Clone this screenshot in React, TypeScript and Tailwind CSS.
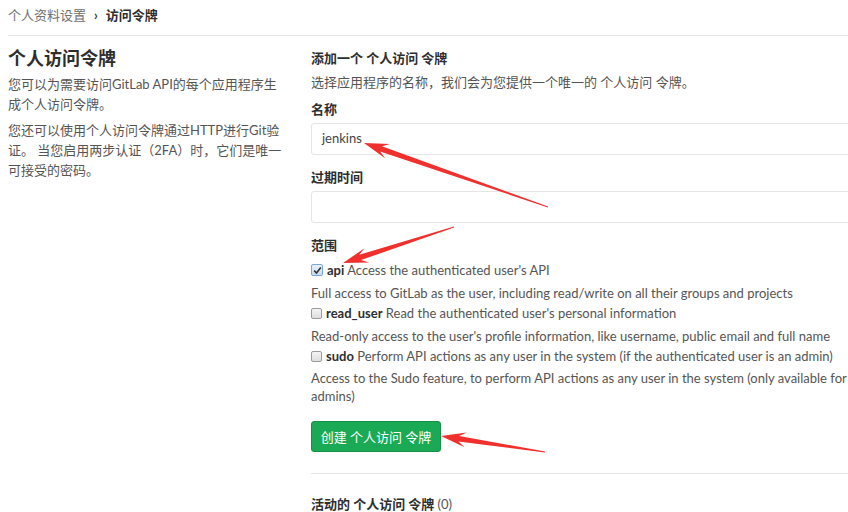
import React from "react";

const FONT = { fontFamily: '"Lato", "Noto Sans CJK SC", sans-serif' };

function arrowPoints(tx: number, ty: number, hx: number, hy: number) {
  const dx = hx - tx;
  const dy = hy - ty;
  const len = Math.hypot(dx, dy);
  const ux = dx / len;
  const uy = dy / len;
  const nx = -uy;
  const ny = ux;
  const headLen = 25;
  const headW = 7.5;
  const jointLen = 18;
  const shaftW = 2.8;
  const tailW = 0.4;
  const wx = hx - ux * headLen;
  const wy = hy - uy * headLen;
  const jx = hx - ux * jointLen;
  const jy = hy - uy * jointLen;
  const pts = [
    [tx + nx * tailW, ty + ny * tailW],
    [jx + nx * shaftW, jy + ny * shaftW],
    [wx + nx * headW, wy + ny * headW],
    [hx, hy],
    [wx - nx * headW, wy - ny * headW],
    [jx - nx * shaftW, jy - ny * shaftW],
    [tx - nx * tailW, ty - ny * tailW],
  ];
  return pts.map((p) => `${p[0].toFixed(1)},${p[1].toFixed(1)}`).join(" ");
}

function CheckBox({ checked }: { checked?: boolean }) {
  if (checked) {
    return (
      <span className="inline-flex items-center justify-center w-[12px] h-[12px] border border-[#7aa7d8] rounded-[2px] bg-gradient-to-b from-[#e6f0fb] to-[#c9dcf2] shrink-0">
        <svg width="9" height="9" viewBox="0 0 9 9">
          <path d="M1.2 4.6 L3.5 7 L7.8 1.6" stroke="#333" strokeWidth="1.6" fill="none" />
        </svg>
      </span>
    );
  }
  return (
    <span className="inline-block w-[11px] h-[11px] border border-[#9a9a9a] rounded-[2px] bg-gradient-to-b from-[#f4f4f4] to-[#dedede] shrink-0" />
  );
}

function Scope({ checked, name, text }: { checked?: boolean; name: string; text: string }) {
  return (
    <div className="flex items-center gap-[4px] h-[20px] leading-[20px] whitespace-nowrap">
      <CheckBox checked={checked} />
      <span>
        <b className="font-bold text-[#2e2e2e]">{name}</b> {text}
      </span>
    </div>
  );
}

export default function App() {
  return (
    <div className="relative w-[848px] h-[512px] overflow-hidden bg-white text-[13px] text-[#555]" style={FONT}>
      <div className="pl-2">
        <div className="h-[36px] pt-[6px] leading-[18px] border-b border-[#e5e5e5] flex items-start gap-[8px]">
          <span className="text-[#707070]">个人资料设置</span>
          <span className="font-bold text-[#333] text-[13px]">›</span>
          <span className="font-bold text-[#2e2e2e]">访问令牌</span>
        </div>
      </div>

      <div className="flex pl-2">
        <div className="w-[303px] shrink-0">
          <h4 className="mt-[10px] text-[18px] leading-[24px] font-bold text-[#2e2e2e]">个人访问令牌</h4>
          <p className="mt-[4px] leading-[20px] whitespace-nowrap">
            您可以为需要访问GitLab API的每个应用程序生
            <br />
            成个人访问令牌。
          </p>
          <p className="mt-[6px] leading-[20px] whitespace-nowrap">
            您还可以使用个人访问令牌通过HTTP进行Git验
            <br />
            证。 当您启用两步认证（2FA）时，它们是唯一
            <br />
            可接受的密码。
          </p>
        </div>

        <div className="w-[540px] shrink-0">
          <h5 className="mt-[12px] leading-[20px] font-bold text-[#2e2e2e]">添加一个 个人访问 令牌</h5>
          <p className="mt-[4px] leading-[20px]">选择应用程序的名称，我们会为您提供一个唯一的 个人访问 令牌。</p>

          <label className="block mt-[7px] leading-[20px] font-bold text-[#2e2e2e]">名称</label>
          <div className="mt-[4px] w-[560px] h-[32px] border border-[#e5e5e5] rounded-[3px] flex items-center px-[10px] text-[#444]">
            jenkins
          </div>

          <label className="block mt-[12px] leading-[20px] font-bold text-[#2e2e2e]">过期时间</label>
          <div className="mt-[4px] w-[560px] h-[32px] border border-[#e5e5e5] rounded-[3px]" />

          <label className="block mt-[12px] leading-[20px] font-bold text-[#2e2e2e]">范围</label>
          <div className="mt-[5px]">
            <Scope checked name="api" text="Access the authenticated user's API" />
            <p className="mt-[3px] leading-[20px] whitespace-nowrap">
              Full access to GitLab as the user, including read/write on all their groups and projects
            </p>
            <Scope name="read_user" text="Read the authenticated user's personal information" />
            <p className="mt-[3px] leading-[20px] whitespace-nowrap">
              Read-only access to the user's profile information, like username, public email and full name
            </p>
            <Scope name="sudo" text="Perform API actions as any user in the system (if the authenticated user is an admin)" />
            <p className="mt-[3px] leading-[18px] whitespace-nowrap">
              Access to the Sudo feature, to perform API actions as any user in the system (only available for
              <br />
              admins)
            </p>
          </div>

          <button className="mt-[16px] w-[130px] h-[31px] rounded-[3px] bg-[#1aaa55] border border-[#168f48] text-white text-[13px] leading-[20px]">
            创建 个人访问 令牌
          </button>

          <div className="mt-[21px] w-[560px] border-t border-[#e5e5e5]" />

          <h5 className="mt-[20px] leading-[20px] font-bold text-[#2e2e2e]">
            活动的 个人访问 令牌 <span className="font-normal text-[#555]">(0)</span>
          </h5>
        </div>
      </div>

      <svg className="absolute inset-0 pointer-events-none" width="848" height="512">
        <polygon points={arrowPoints(548, 207, 364, 143)} fill="#f0302c" />
        <polygon points={arrowPoints(454, 227, 343, 263)} fill="#f0302c" />
        <polygon points={arrowPoints(545, 452, 441, 436)} fill="#f0302c" />
      </svg>
    </div>
  );
}
